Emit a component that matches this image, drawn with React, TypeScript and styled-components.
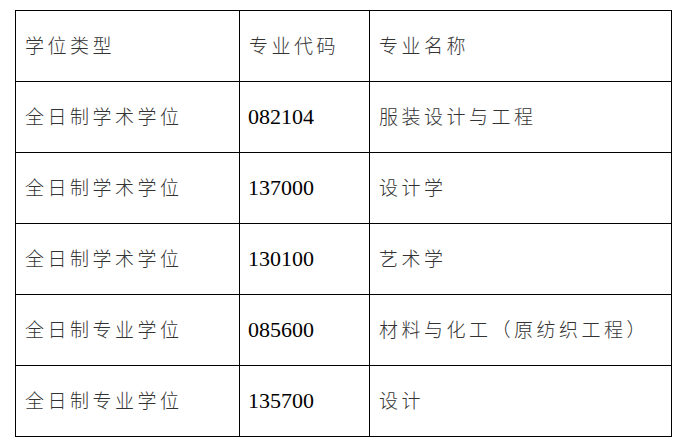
import styled, { createGlobalStyle } from "styled-components"

const GlobalStyle = createGlobalStyle`
    html, body {
        margin: 0;
        padding: 0;
        background: #fff;
    }
`

const rows = [
    { type: '全日制学术学位', code: '082104', name: '服装设计与工程' },
    { type: '全日制学术学位', code: '137000', name: '设计学' },
    { type: '全日制学术学位', code: '130100', name: '艺术学' },
    { type: '全日制专业学位', code: '085600', name: '材料与化工（原纺织工程）' },
    { type: '全日制专业学位', code: '135700', name: '设计' },
]

export default function App() {
    return (
        <>
            <GlobalStyle />
            <StyledPage>
                <StyledTable>
                    <colgroup>
                        <col style={{ width: 224 }} />
                        <col style={{ width: 130 }} />
                        <col style={{ width: 302 }} />
                    </colgroup>
                    <thead>
                        <tr>
                            <Cell>学位类型</Cell>
                            <Cell>专业代码</Cell>
                            <Cell>专业名称</Cell>
                        </tr>
                    </thead>
                    <tbody>
                        {rows.map(row => (
                            <tr key={row.code}>
                                <Cell>{row.type}</Cell>
                                <Cell $isNumber>{row.code}</Cell>
                                <Cell>{row.name}</Cell>
                            </tr>
                        ))}
                    </tbody>
                </StyledTable>
            </StyledPage>
        </>
    )
}


const StyledPage = styled.main`
    padding: 10px 0 0 15px;
    width: 678px;
    height: 445px;
    box-sizing: border-box;
`

const StyledTable = styled.table`
    border-collapse: collapse;
    table-layout: fixed;
    width: 656px;

    tr {
        height: 71px;
    }
`

const Cell = styled.td<{ $isNumber?: boolean }>`
    border: 1px solid #000;
    padding: 0 0 ${({ $isNumber }) => $isNumber ? '0' : '3px'} ${({ $isNumber }) => $isNumber ? '8px' : '9px'};
    vertical-align: middle;
    white-space: nowrap;
    font-family: ${({ $isNumber }) => $isNumber
        ? '"Liberation Serif", "Times New Roman", serif'
        : '"Noto Sans CJK SC", sans-serif'};
    font-size: ${({ $isNumber }) => $isNumber ? '22px' : '19px'};
    letter-spacing: ${({ $isNumber }) => $isNumber ? '0' : '3.5px'};
    font-weight: ${({ $isNumber }) => $isNumber ? 400 : 300};
    color: ${({ $isNumber }) => $isNumber ? '#000' : '#333'};
    line-height: 1;
`
